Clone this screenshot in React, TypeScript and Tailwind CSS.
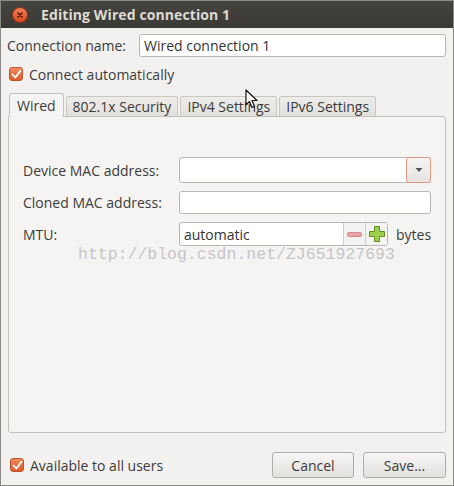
import React from 'react';

const font = { fontFamily: '"Open Sans", "DejaVu Sans", sans-serif' };

const Check: React.FC = () => (
  <span className="w-[14px] h-[14px] rounded-[3px] border border-[#c0542a] bg-gradient-to-b from-[#f08a5d] to-[#dd5b2c] flex items-center justify-center">
    <svg width="11" height="11" viewBox="0 0 11 11">
      <path d="M1.5 5.5 L4.3 8.5 L9.5 1.8" stroke="#fff" strokeWidth="1.8" fill="none" strokeLinecap="round" strokeLinejoin="round" />
    </svg>
  </span>
);

const Tab: React.FC<{ label: string; active?: boolean }> = ({ label, active }) => (
  <div
    className={
      active
        ? 'h-[24px] px-[7px] flex items-center border border-b-0 border-[#c4c2bd] rounded-t-[3px] bg-[#f5f4f3] text-[#3c3c3c] relative z-10'
        : 'h-[20px] px-[6px] flex items-center border border-b-0 border-[#c9c7c2] rounded-t-[3px] bg-gradient-to-b from-[#eeedeb] to-[#e2e0dd] text-[#3c3c3c] mb-[1px]'
    }
  >
    {label}
  </div>
);

export default function App() {
  return (
    <div className="w-[454px] h-[486px] bg-[#f2f1f0] flex flex-col border border-[#8a8986] text-[14px] text-[#3c3c3c] relative overflow-hidden" style={font}>
      {/* Title bar */}
      <div className="h-[27px] bg-gradient-to-b from-[#45443f] to-[#3a3935] flex items-center pl-[11px] gap-[13px] shrink-0">
        <span className="w-[16px] h-[16px] rounded-full bg-gradient-to-b from-[#f27d53] to-[#d8461b] border border-[#9a3514] flex items-center justify-center">
          <svg width="8" height="8" viewBox="0 0 8 8">
            <path d="M2 2 L6 6 M6 2 L2 6" stroke="#3b1407" strokeWidth="1.4" strokeLinecap="round" />
          </svg>
        </span>
        <span className="text-[#dfdbd2] font-bold text-[14px] tracking-[0.1px]">Editing Wired connection 1</span>
      </div>

      <div className="flex-1 flex flex-col px-[7px] pt-[6px] pb-[7px]">
        {/* Connection name */}
        <div className="flex items-center h-[23px]">
          <span className="w-[132px] shrink-0 -ml-[1px]">Connection name:</span>
          <div className="flex-1 h-[23px] bg-white border border-[#b9b7b2] rounded-[3px] flex items-center px-[4px] text-[#333]">
            Wired connection 1
          </div>
        </div>

        {/* Connect automatically */}
        <div className="flex items-center gap-[6px] mt-[9px] h-[16px] pl-[1px]">
          <Check />
          <span>Connect automatically</span>
        </div>

        {/* Tabs */}
        <div className="flex items-end gap-[2px] mt-[11px] pl-[1px]">
          <Tab label="Wired" active />
          <Tab label="802.1x Security" />
          <Tab label="IPv4 Settings" />
          <Tab label="IPv6 Settings" />
        </div>

        {/* Panel */}
        <div className="flex-1 -mt-[1px] border border-[#c4c2bd] rounded-b-[3px] rounded-tr-[3px] bg-[#f5f4f3] pt-[40px] pl-[14px] pr-[15px]">
          <div className="grid grid-cols-[156px_1fr] gap-y-[8px] items-center">
            <span>Device MAC address:</span>
            <div className="h-[26px] flex border border-[#b9b7b2] rounded-[3px] bg-white">
              <div className="flex-1" />
              <div className="w-[25px] -my-[1px] -mr-[1px] border border-[#df9a86] rounded-[3px] bg-gradient-to-b from-[#f6f5f4] to-[#e6e4e1] flex items-center justify-center">
                <svg width="8" height="6" viewBox="0 0 8 6">
                  <path d="M0.5 1 L7.5 1 L4 5 Z" fill="#555" />
                </svg>
              </div>
            </div>

            <span>Cloned MAC address:</span>
            <div className="h-[23px] border border-[#b9b7b2] rounded-[3px] bg-white" />

            <span>MTU:</span>
            <div className="flex items-center gap-[8px]">
              <div className="w-[209px] h-[24px] flex border border-[#b9b7b2] rounded-[3px] bg-white">
                <span className="flex-1 flex items-center px-[4px] text-[#333]">automatic</span>
                <div className="w-[22px] border-l border-[#cfcdc9] bg-[#f4f3f2] flex items-center justify-center">
                  <span className="w-[15px] h-[5px] rounded-[2px] bg-[#e8a3a8] border border-[#d8868c]" />
                </div>
                <div className="w-[22px] border-l border-[#cfcdc9] bg-[#f4f3f2] flex items-center justify-center rounded-r-[3px]">
                  <svg width="18" height="18" viewBox="0 0 18 18">
                    <path d="M6.5 1.5 H11.5 V6.5 H16.5 V11.5 H11.5 V16.5 H6.5 V11.5 H1.5 V6.5 H6.5 Z" fill="#9cd04a" stroke="#5f8f1f" strokeWidth="1" strokeLinejoin="round" />
                  </svg>
                </div>
              </div>
              <span>bytes</span>
            </div>
          </div>
          <div className="-mt-[1px] ml-[55px] text-[16.5px] text-[#c6c6c6] leading-[20px]" style={{ fontFamily: '"Liberation Mono", monospace' }}>
            http://blog.csdn.net/ZJ651927693
          </div>
        </div>

        {/* Bottom */}
        <div className="flex items-center mt-[19px] h-[26px]">
          <div className="flex items-center gap-[6px] pl-[2px] flex-1">
            <Check />
            <span>Available to all users</span>
          </div>
          <div className="flex gap-[9px]">
            <button className="w-[82px] h-[26px] border border-[#aeaca7] rounded-[3px] bg-gradient-to-b from-[#f7f6f5] to-[#e3e1de] text-[#3c3c3c]">Cancel</button>
            <button className="w-[83px] h-[26px] border border-[#aeaca7] rounded-[3px] bg-gradient-to-b from-[#f7f6f5] to-[#e3e1de] text-[#3c3c3c]">Save...</button>
          </div>
        </div>
      </div>

      {/* Mouse cursor */}
      <svg className="absolute left-[244px] top-[88px]" width="14" height="20" viewBox="0 0 14 20">
        <path d="M1 1 L1 16 L4.5 12.5 L7 18.5 L9.5 17.5 L7 11.5 L12 11.5 Z" fill="#fff" stroke="#111" strokeWidth="1.2" strokeLinejoin="round" />
      </svg>
    </div>
  );
}
